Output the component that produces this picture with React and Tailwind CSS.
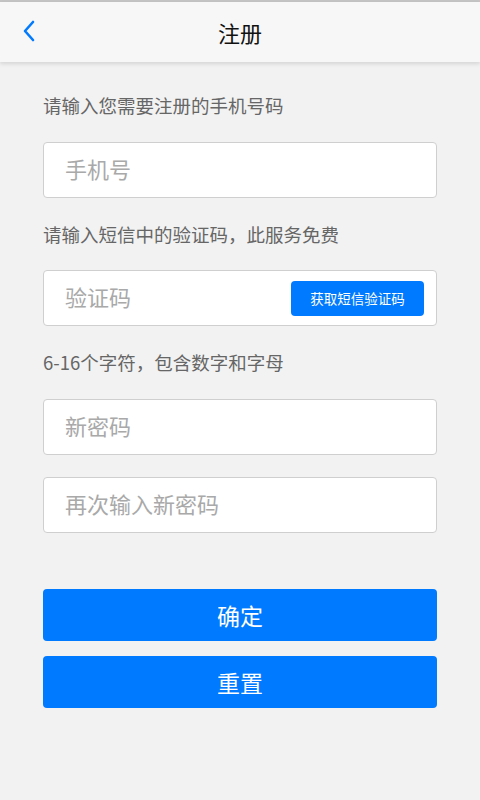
import React from 'react'

const font = { fontFamily: '"Noto Sans CJK SC", "Noto Sans", sans-serif' }

const Field = ({ placeholder, children }) => (
  <div className="h-[56px] bg-white border border-[#cfcfcf] rounded-[4px] flex items-center pl-[21px] pr-[12px]">
    <input
      className="flex-1 min-w-0 mb-[5px] bg-transparent outline-none text-[22px] leading-[28px] text-[#333] placeholder:text-[#a9a9a9]"
      placeholder={placeholder}
    />
    {children}
  </div>
)

const App = () => {
  return (
    <div className="w-[480px] h-[800px] bg-[#f2f2f2] flex flex-col" style={font}>
      <div className="h-[2px] bg-[#c4c4c4]" />
      <div className="h-[60px] bg-[#f7f7f7] shadow-[0_2px_4px_rgba(0,0,0,0.12)] relative flex items-center justify-center z-10">
        <button className="absolute left-[19px] top-[16px] w-[20px] h-[26px] flex items-center justify-center">
          <svg width="14" height="22" viewBox="0 0 14 22" fill="none">
            <path d="M11 2 L3 11 L11 20" stroke="#007aff" strokeWidth="2.6" strokeLinecap="round" strokeLinejoin="round" />
          </svg>
        </button>
        <div className="text-[22px] text-[#111]">注册</div>
      </div>

      <div className="flex flex-col px-[43px]">
        <div className="mt-[30px] text-[18.5px] text-[#666] leading-[26px]">请输入您需要注册的手机号码</div>
        <div className="mt-[24px]">
          <Field placeholder="手机号" />
        </div>

        <div className="mt-[23px] text-[18.5px] text-[#666] leading-[26px]">请输入短信中的验证码，此服务免费</div>
        <div className="mt-[23px]">
          <Field placeholder="验证码">
            <button className="w-[133px] h-[35px] bg-[#007aff] rounded-[4px] text-white text-[13.5px] shrink-0">
              获取短信验证码
            </button>
          </Field>
        </div>

        <div className="mt-[23px] text-[18.5px] text-[#666] leading-[26px]">6-16个字符，包含数字和字母</div>
        <div className="mt-[24px]">
          <Field placeholder="新密码" />
        </div>
        <div className="mt-[22px]">
          <Field placeholder="再次输入新密码" />
        </div>

        <button className="mt-[56px] h-[52px] bg-[#007aff] rounded-[4px] text-white text-[23px]">确定</button>
        <button className="mt-[15px] h-[52px] bg-[#007aff] rounded-[4px] text-white text-[23px]">重置</button>
      </div>
    </div>
  )
}

export default App
